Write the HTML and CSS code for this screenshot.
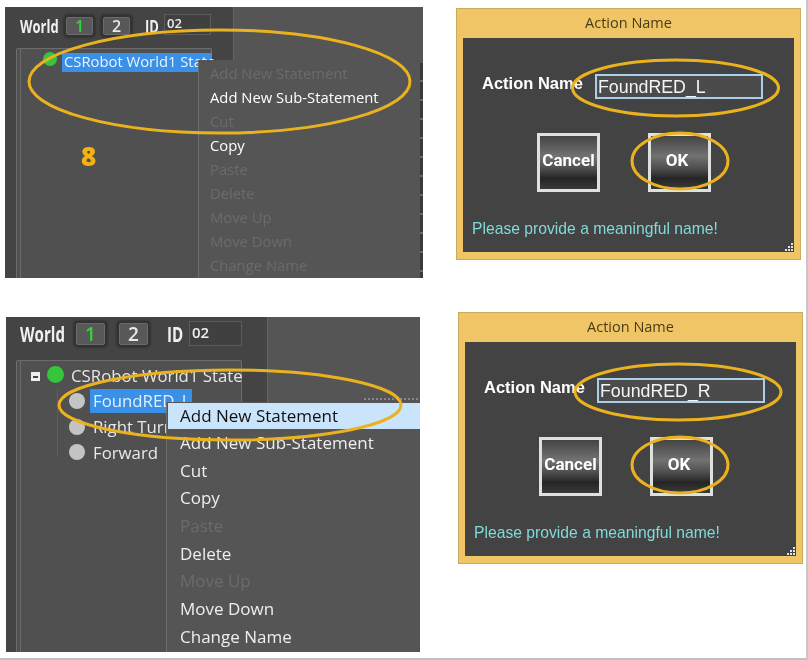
FILE: index.html
```html
<!DOCTYPE html>
<html lang="en">
<head>
<meta charset="utf-8">
<title>Action Name</title>
<link rel="stylesheet" href="styles.css">
</head>
<body>
<main class="canvas">

  <section class="panel panel-a">
    <div class="side">
      <div class="toolbar">
        <span class="world">World</span>
        <span class="wbtn on">1</span>
        <span class="wbtn">2</span>
        <span class="world idlabel">ID</span>
        <span class="idbox">02</span>
      </div>
      <div class="tree">
        <div class="row root"><i class="dot green"></i><span class="sel">CSRobot World1 State</span></div>
      </div>
    </div>
    <div class="strip"></div>
    <ul class="menu">
      <li class="off">Add New Statement</li>
      <li>Add New Sub-Statement</li>
      <li class="off">Cut</li>
      <li>Copy</li>
      <li class="off">Paste</li>
      <li class="off">Delete</li>
      <li class="off">Move Up</li>
      <li class="off">Move Down</li>
      <li class="off">Change Name</li>
    </ul>
    <span class="step">8</span>
  </section>

  <section class="panel panel-b">
    <div class="side">
      <div class="toolbar">
        <span class="world">World</span>
        <span class="wbtn on">1</span>
        <span class="wbtn">2</span>
        <span class="world idlabel">ID</span>
        <span class="idbox">02</span>
      </div>
      <div class="tree">
        <div class="row root"><b class="expander"></b><i class="dot green"></i><span>CSRobot World1 State</span></div>
        <div class="children">
          <div class="row"><i class="dot grey"></i><span class="sel">FoundRED_L</span></div>
          <div class="row"><i class="dot grey"></i><span>Right Turn</span></div>
          <div class="row"><i class="dot grey"></i><span>Forward</span></div>
        </div>
      </div>
    </div>
    <div class="ticks"></div>
    <ul class="menu">
      <li class="hot">Add New Statement</li>
      <li>Add New Sub-Statement</li>
      <li>Cut</li>
      <li>Copy</li>
      <li class="off">Paste</li>
      <li>Delete</li>
      <li class="off">Move Up</li>
      <li>Move Down</li>
      <li>Change Name</li>
    </ul>
  </section>

  <section class="dialog dialog-a">
    <h2 class="title">Action Name</h2>
    <div class="body">
      <div class="field"><span class="label">Action Name</span><span class="input">FoundRED_L</span></div>
      <div class="actions"><span class="btn">Cancel</span><span class="btn">OK</span></div>
      <p class="hint">Please provide a meaningful name!</p>
      <svg class="grip" width="9" height="9" viewBox="0 0 9 9"><path d="M7 1h2v2H7zM4 4h2v2H4zM7 4h2v2H7zM1 7h2v2H1zM4 7h2v2H4zM7 7h2v2H7z" fill="#e4e4e4"/></svg>
    </div>
  </section>

  <section class="dialog dialog-b">
    <h2 class="title">Action Name</h2>
    <div class="body">
      <div class="field"><span class="label">Action Name</span><span class="input">FoundRED_R</span></div>
      <div class="actions"><span class="btn">Cancel</span><span class="btn">OK</span></div>
      <p class="hint">Please provide a meaningful name!</p>
      <svg class="grip" width="9" height="9" viewBox="0 0 9 9"><path d="M7 1h2v2H7zM4 4h2v2H4zM7 4h2v2H7zM1 7h2v2H1zM4 7h2v2H4zM7 7h2v2H7z" fill="#e4e4e4"/></svg>
    </div>
  </section>

  <svg class="marks" width="808" height="660" viewBox="0 0 808 660">
    <ellipse cx="219.500" cy="81.500" rx="190.500" ry="51.500"/>
    <ellipse cx="230" cy="405" rx="171" ry="35"/>
    <ellipse cx="675.500" cy="88" rx="103" ry="28"/>
    <ellipse cx="680" cy="161" rx="48" ry="28"/>
    <ellipse cx="678" cy="392" rx="103" ry="28"/>
    <ellipse cx="680" cy="465" rx="48" ry="28"/>
  </svg>
</main>
</body>
</html>
```
FILE: styles.css
```css
* { box-sizing: border-box; }
html, body { margin: 0; padding: 0; background: #fff; }
.canvas {
  position: relative;
  width: 808px;
  height: 660px;
  overflow: hidden;
  background: #fff;
  border-right: 2px solid #c8c8c8;
  border-bottom: 2px solid #c0c0c0;
  font-family: "Open Sans", "Liberation Sans", sans-serif;
}

/* Screenshot panels */
.panel {
  position: absolute;
  background: #555;
  overflow: hidden;
  color: #fff;
  filter: blur(.35px);
}
.panel-a { left: 5px; top: 7px; width: 418px; height: 271px; }
.panel-b { left: 6px; top: 317px; width: 414px; height: 335px; }

.side {
  background: #444;
  height: 100%;
  border-right: 1px solid #666;
}
.panel-a .side { width: 229px; padding: 6px 0 0 11px; }
.panel-b .side { width: 262px; padding: 1px 0 0 10px; }

.toolbar { display: flex; align-items: center; }
.panel-a .toolbar { height: 26px; margin-left: 4px; }
.panel-b .toolbar { height: 32px; margin-left: 4px; }
.world {
  font-weight: 700;
  color: #f0f0f0;
  display: inline-block;
  transform-origin: left center;
  transform: scaleX(.72);
}
.panel-a .world { font-size: 18px; width: 46px; }
.panel-b .world { font-size: 21px; width: 55px; }
.panel-a .idlabel { width: 19px; margin-left: 5px; }
.panel-b .idlabel { width: 22px; margin-left: 5px; }

.wbtn {
  display: flex;
  align-items: center;
  justify-content: center;
  background: #585858;
  border: 1px solid #6a6a6a;
  border-radius: 2px;
  box-shadow: 0 0 2px 3px #333;
  color: #e8e8e8;
  font-weight: 600;
}
.wbtn.on { color: #35d43a; }
.panel-a .wbtn { width: 27px; height: 18px; font-size: 16px; margin-right: 10px; }
.panel-b .wbtn { width: 29px; height: 22px; font-size: 19px; margin-right: 14px; }
.panel-b .wbtn.on { margin-left: 1px; }

.idbox {
  border: 1px solid #5c5c5c;
  background: #404040;
  color: #eee;
  font-weight: 600;
  line-height: 1;
}
.panel-a .idbox { width: 47px; height: 21px; font-size: 13px; padding: 2px 2px; margin-top: -3px; }
.panel-b .idbox { width: 53px; height: 25px; font-size: 15px; padding: 3px 2px; margin-top: -2px; }

.tree {
  background: #505050;
  border: 1px solid #6c6c6c;
  border-bottom: 0;
  border-radius: 2px 2px 0 0;
  box-shadow: inset 3px 0 0 #505050, inset 4px 0 0 #6a6a6a;
  height: 400px;
}
.panel-a .tree { width: 196px; margin-top: 9px; padding: 3px 0 0 20px; }
.panel-b .tree { width: 226px; margin-top: 10px; padding: 2px 0 0 14px; }

.row { display: flex; align-items: center; white-space: nowrap; }
.dot { display: block; border-radius: 50%; flex: none; }
.green { background: #35c63c; }
.grey { background: #c4c4c4; }
.panel-a .row { height: 20px; font-size: 14.800px; font-weight: 500; }
.panel-a .dot { width: 14px; height: 14px; margin: -6px 5px 0 6px; }
.panel-a .sel { background: #3a90e6; padding: 0 2px; height: 19px; line-height: 17px; color: #e8f4ff; width: 150px; }

.panel-b .row { height: 25.500px; font-size: 16.800px; }
.panel-b .root { color: #e6e6e6; }
.panel-b .root .dot { width: 17px; height: 17px; margin: -3px 7px 0 7px; }
.panel-b .expander {
  display: block;
  position: relative;
  width: 9px;
  height: 9px;
  background: #eee;
  flex: none;
  margin-top: 1px;
}
.panel-b .expander::after {
  content: "";
  position: absolute;
  left: 2px;
  right: 2px;
  top: 4px;
  height: 2px;
  background: #444;
}
.children {
  margin-left: 26px;
  border-left: 1px solid #5f5f5f;
  height: 67px;
  padding-left: 11px;
}
.panel-b .children .dot { width: 16px; height: 16px; margin: 0 8px 0 0; }
.panel-b .sel { background: #3a90e6; padding: 0 3px; height: 24px; line-height: 23px; width: 102px; margin-left: -3px; color: #dff0ff; }
.panel-b .children .row:nth-child(2) span,
.panel-b .children .row:nth-child(3) span { color: #e8e8e8; }

.strip {
  position: absolute;
  left: 415px;
  top: 56px;
  bottom: 0;
  width: 3px;
  background: repeating-linear-gradient(#3a3a3a 0 17px, #686868 17px 19px);
}
.ticks {
  position: absolute;
  left: 358px;
  top: 81px;
  width: 56px;
  height: 2px;
  background: repeating-linear-gradient(90deg, #888 0 2px, #555 2px 4px);
}

/* Context menus lie over the tree */
.menu {
  position: absolute;
  margin: 0;
  padding: 0;
  list-style: none;
  background: #555;
  border-left: 1px solid #6e6e6e;
}
.panel-a .menu { left: 193px; top: 53px; width: 220px; bottom: 0; padding: 1px 0 0 11px; font-size: 14.800px; font-weight: 500; }
.panel-a .menu li { height: 24px; line-height: 24px; white-space: nowrap; }
.panel-b .menu { left: 160px; top: 85px; right: 0; bottom: 0; font-size: 17px; }
.panel-b .menu li { height: 27.700px; line-height: 28px; padding-left: 13px; white-space: nowrap; color: #eee; }
.menu li.off { color: #6b6b6b; }
.panel-b .menu li.hot {
  background: #c9e4fb;
  color: #111;
  margin: 1px 0 0 1px;
  height: 26px;
  line-height: 26px;
  padding-left: 12px;
}
.step {
  position: absolute;
  left: 76px;
  top: 131px;
  font-size: 26px;
  font-weight: 800;
  color: #f5b312;
}

/* Dialogs */
.dialog {
  position: absolute;
  width: 345px;
  height: 252px;
  padding: 0 6px 7px;
  background: #f0c566;
  border: 1px solid #c9aa62;
  display: flex;
  flex-direction: column;
  filter: blur(.3px);
}
.dialog-a { left: 456px; top: 8px; }
.dialog-b { left: 458px; top: 312px; }
.title {
  margin: 0;
  height: 29px;
  line-height: 28px;
  text-align: center;
  font-size: 14.500px;
  font-weight: 400;
  color: #4a3c18;
}
.body {
  position: relative;
  flex: 1;
  background: #434343;
  padding: 36px 0 0 19px;
  font-family: "Liberation Sans", Arial, sans-serif;
  color: #fff;
}
.field { display: flex; align-items: center; }
.label { width: 113px; font-size: 16.500px; font-weight: 700; margin-top: -7px; white-space: nowrap; }
.input {
  width: 168px;
  height: 25px;
  border: 2px solid #a9d0e8;
  background: #4b4b4b;
  padding-left: 1px;
  line-height: 22px;
  font-size: 17.800px;
  color: #f4f4f4;
}
.actions { display: flex; gap: 48px; margin: 34px 0 0 55px; }
.btn {
  width: 63px;
  height: 59px;
  border: 3px solid #e0e0e0;
  background: linear-gradient(#444 0, #727272 38%, #505050 60%, #252525 80%, #3a3a3a 100%);
  display: flex;
  align-items: center;
  justify-content: center;
  font-family: Roboto, "Liberation Sans", sans-serif;
  font-size: 17px;
  font-weight: 700;
  padding-bottom: 6px;
  color: #fff;
}
.btn:last-child { padding-right: 5px; }
.hint {
  margin: 27px 0 0 -10px;
  font-size: 15.700px;
  line-height: 20px;
  color: #7fdad8;
  white-space: nowrap;
}
.grip { position: absolute; right: 1px; bottom: 1px; }

/* Hand-drawn annotation rings over everything */
.marks { position: absolute; left: 0; top: 0; pointer-events: none; }
.marks ellipse { fill: none; stroke: #e9b21e; stroke-width: 3; }
```
